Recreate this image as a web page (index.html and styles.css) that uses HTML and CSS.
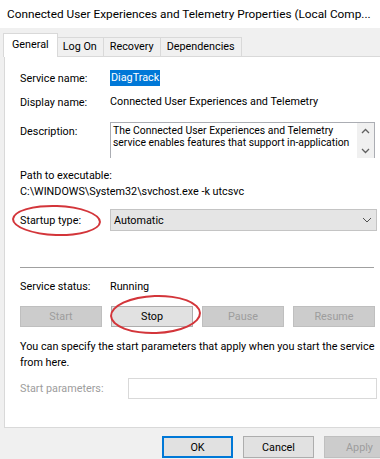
FILE: index.html
```html
<!DOCTYPE html>
<html lang="en">
<head>
  <meta charset="UTF-8" />
  <title>Connected User Experiences and Telemetry Properties</title>
  <link rel="stylesheet" href="styles.css">
</head>
<body>
  <div class="window">
    <div class="titlebar">Connected User Experiences and Telemetry Properties (Local Comp...</div>

    <div class="client">
      <div class="tabs">
        <div class="tab active">General</div>
        <div class="tab">Log On</div>
        <div class="tab">Recovery</div>
        <div class="tab">Dependencies</div>
      </div>

      <div class="panel">
        <div class="row row-name">
          <span class="label">Service name:</span>
          <span class="value"><span class="sel">DiagTrack</span></span>
        </div>
        <div class="row row-display">
          <span class="label">Display name:</span>
          <span class="value">Connected User Experiences and Telemetry</span>
        </div>
        <div class="row row-desc">
          <span class="label">Description:</span>
          <div class="desc">
            <div class="desc-text">The Connected User Experiences and Telemetry<br>service enables features that support in-application</div>
            <div class="scroll">
              <svg width="9" height="6" viewBox="0 0 9 6"><path d="M1 5 L4.5 1.5 L8 5" fill="none" stroke="#606060" stroke-width="1.3"/></svg>
              <svg width="9" height="6" viewBox="0 0 9 6"><path d="M1 1 L4.5 4.5 L8 1" fill="none" stroke="#606060" stroke-width="1.3"/></svg>
            </div>
          </div>
        </div>

        <div class="path">
          <div>Path to executable:</div>
          <div>C:\WINDOWS\System32\svchost.exe -k utcsvc</div>
        </div>

        <div class="row row-startup">
          <span class="label">Startup type:</span>
          <div class="select">
            <span>Automatic</span>
            <svg width="10" height="6" viewBox="0 0 10 6"><path d="M1 1 L5 5 L9 1" fill="none" stroke="#505050" stroke-width="1"/></svg>
          </div>
        </div>

        <div class="sep"></div>

        <div class="row row-status">
          <span class="label">Service status:</span>
          <span class="value">Running</span>
        </div>

        <div class="svc-btns">
          <button class="btn" disabled>Start</button>
          <button class="btn">Stop</button>
          <button class="btn" disabled>Pause</button>
          <button class="btn" disabled>Resume</button>
        </div>

        <p class="hint">You can specify the start parameters that apply when you start the service from here.</p>

        <div class="row row-params">
          <span class="label dim">Start parameters:</span>
          <div class="input"></div>
        </div>
      </div>

      <div class="footer">
        <button class="btn ok">OK</button>
        <button class="btn">Cancel</button>
        <button class="btn" disabled>Apply</button>
      </div>
    </div>

    <!-- red marks drawn over the screenshot -->
    <div class="mark mark-startup"></div>
    <div class="mark mark-stop"></div>
  </div>
</body>
</html>
```

FILE: styles.css
```css
:root {
  --face: #f0f0f0;
  --panel-border: #d9d9d9;
  --btn-bg: #e1e1e1;
  --btn-border: #adadad;
  --btn-off-bg: #cccccc;
  --btn-off-border: #bfbfbf;
  --off-text: #9d9d9d;
  --accent: #0078d7;
  --mark: #d3353a;
}

html, body { margin: 0; height: 100%; overflow: hidden; }
body {
  font-family: "Segoe UI", Roboto, "Liberation Sans", sans-serif;
  font-size: 10.8px;
  color: #000;
  background: #fff;
}

.window { position: relative; width: 400px; }

.titlebar { width: 373px; height: 28px; line-height: 28px; padding-left: 7px; font-size: 11.8px; background: #fff; white-space: nowrap; }

.client { background: var(--face); padding-bottom: 10px; }

/* tabs */
.tabs { display: flex; align-items: flex-end; height: 28px; padding-left: 4px; }
.tab { height: 19px; line-height: 18px; padding: 0 6px; box-sizing: border-box; border: 1px solid var(--panel-border); border-bottom: none; margin-left: -1px; background: var(--face); }
.tab.active { position: relative; z-index: 1; height: 24px; line-height: 22px; padding: 0 8px; margin: 0 -1px -1px -1px; background: #fff; }

/* general page */
.panel { margin-left: 4px; background: #fff; border: 1px solid var(--panel-border); padding: 13px 0 28px 15px; }
.row { display: flex; align-items: center; }
.label { width: 90px; flex: none; }
.value { line-height: 16px; }
.dim { color: var(--off-text); }

.sel { background: var(--accent); color: #fff; padding: 0 1px; display: inline-block; line-height: 16px; }
.row-display { margin-top: 8px; }

.row-desc { margin-top: 12px; align-items: flex-start; }
.row-desc .label { padding-top: 3px; }
.desc { display: flex; width: 265px; height: 36px; box-sizing: border-box; border: 1px solid #abadb3; border-bottom: none; overflow: hidden; }
.desc-text { flex: 1; padding: 2px 0 0 2px; font-size: 10.4px; line-height: 12px; white-space: nowrap; overflow: hidden; }
.scroll { width: 17px; flex: none; background: var(--face); display: flex; flex-direction: column; align-items: center; justify-content: space-between; padding: 5px 0 4px; box-sizing: border-box; }

.path { margin-top: 10px; line-height: 16px; }

.row-startup { margin-top: 9px; }
.select { flex: none; display: flex; align-items: center; justify-content: space-between; width: 267px; height: 22px; box-sizing: border-box; padding: 0 4px 0 3px; background: #e5e5e5; border: 1px solid #c4c4c4; }

.sep { margin: 36px 5px 0 0; width: 354px; height: 1px; background: #a0a0a0; border-bottom: 1px solid #fff; }

.row-status { margin-top: 10px; line-height: 16px; }

.svc-btns { display: flex; gap: 9px; margin-top: 11px; }
.svc-btns .btn { width: 82px; }

.btn { font: inherit; height: 21px; padding: 0; box-sizing: border-box; background: var(--btn-bg); border: 1px solid var(--btn-border); color: #000; }
.btn:disabled { background: var(--btn-off-bg); border-color: var(--btn-off-border); color: var(--off-text); }

.hint { margin: 12px 0 0; line-height: 16px; width: 358px; }

.row-params { margin-top: 7px; }
.row-params .label { width: 108px; }
.input { width: 249px; height: 21px; box-sizing: border-box; border: 1px solid var(--panel-border); }

.footer { display: flex; gap: 10px; padding: 8px 0 0 162px; }
.footer .btn { width: 71px; height: 22px; }
.footer .ok { border: 2px solid var(--accent); }

/* hand drawn circles */
.mark { position: absolute; border: 2px solid var(--mark); border-radius: 50%; box-sizing: border-box; }
.mark-startup { left: 12px; top: 205px; width: 89px; height: 31px; transform: rotate(2deg); }
.mark-stop { left: 110px; top: 295px; width: 91px; height: 39px; transform: rotate(-2deg); }
```
